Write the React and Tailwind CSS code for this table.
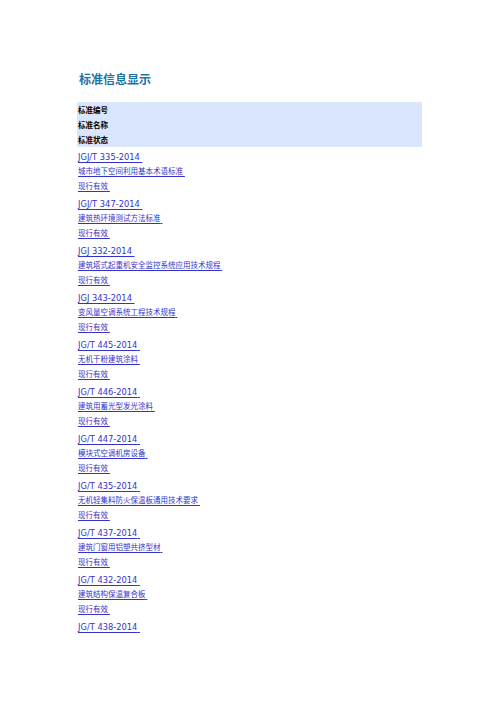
const standards = [
  { code: "JGJ/T 335-2014", name: "城市地下空间利用基本术语标准" },
  { code: "JGJ/T 347-2014", name: "建筑热环境测试方法标准" },
  { code: "JGJ 332-2014", name: "建筑塔式起重机安全监控系统应用技术规程" },
  { code: "JGJ 343-2014", name: "变风量空调系统工程技术规程" },
  { code: "JG/T 445-2014", name: "无机干粉建筑涂料" },
  { code: "JG/T 446-2014", name: "建筑用蓄光型发光涂料" },
  { code: "JG/T 447-2014", name: "模块式空调机房设备" },
  { code: "JG/T 435-2014", name: "无机轻集料防火保温板通用技术要求" },
  { code: "JG/T 437-2014", name: "建筑门窗用铝塑共挤型材" },
  { code: "JG/T 432-2014", name: "建筑结构保温复合板" },
  { code: "JG/T 438-2014", name: "" },
];

const cjk = { fontFamily: '"Liberation Serif", "Noto Sans CJK SC", serif' };
const latin = { fontFamily: '"DejaVu Sans", Verdana, sans-serif' };

export default function App() {
  return (
    <div className="min-h-screen w-[496px] bg-white pl-[78px] pr-[74px] pt-[71px]">
      {/* Title */}
      <h1
        className="ml-[1px] h-[31px] text-[12px] font-bold leading-[15px] text-[#1a73a8]"
        style={{ fontFamily: '"Noto Sans CJK SC", sans-serif' }}
      >
        标准信息显示
      </h1>

      {/* Header */}
      <div
        className="-ml-[1px] w-[345px] rounded-[1px] bg-[#d9e6fd] text-[7.5px] font-bold leading-[15px] text-black"
        style={{ fontFamily: '"Noto Sans CJK SC", sans-serif' }}
      >
        <div className="h-[15px] pl-[1px]">标准编号</div>
        <div className="h-[15px] pl-[1px]">标准名称</div>
        <div className="h-[15px] pl-[1px]">标准状态</div>
      </div>

      {/* List */}
      <div className="text-[#3333cc]">
        {standards.map((s) => (
          <div key={s.code}>
            <div className="h-[17px] pt-[3px] text-[8.3px] leading-[15px]" style={latin}>
              <a href="#" className="underline decoration-[#3333cc] underline-offset-2">
                {s.code}&nbsp;
              </a>
            </div>
            {s.name && (
              <>
                <div className="h-[15px] text-[7.5px] leading-[15px]" style={cjk}>
                  <a href="#" className="underline decoration-[#3333cc] underline-offset-2">
                    {s.name}&nbsp;
                  </a>
                </div>
                <div className="h-[15px] text-[7.5px] leading-[15px]" style={cjk}>
                  <a href="#" className="underline decoration-[#3333cc] underline-offset-2">
                    现行有效&nbsp;
                  </a>
                </div>
              </>
            )}
          </div>
        ))}
      </div>
    </div>
  );
}
